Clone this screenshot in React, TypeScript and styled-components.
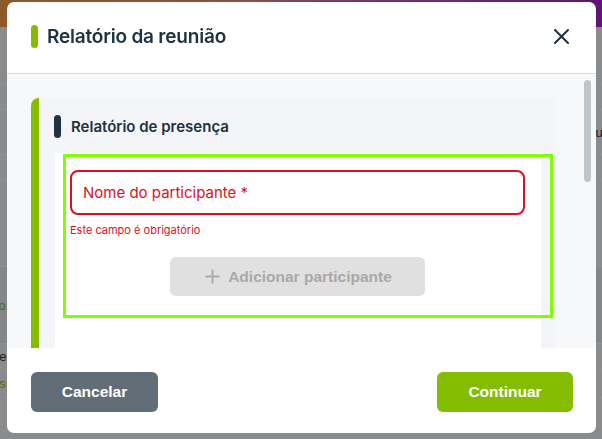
import styled, { createGlobalStyle } from "styled-components";

const GlobalStyle = createGlobalStyle`
  * { box-sizing: border-box; }
  html, body { margin: 0; padding: 0; height: 100%; }
  body {
    font-family: Inter, "Noto Sans", sans-serif;
    background: #eeeff1;
    overflow: hidden;
  }
`;

// page behind the dialog (only its edges show)
const Page = styled.div`
  width: 602px;
  height: 439px;
  display: flex;
  flex-direction: column;
`;

const TopBar = styled.div`
  height: 27px;
  background: linear-gradient(90deg, #f49a45 0%, #e2907a 40%, #c95fb8 60%, #a623c9 100%);
`;

const PageRow = styled.div<{ $h: number; $shade?: boolean }>`
  height: ${p => p.$h}px;
  border-bottom: 1px solid #fafafa;
  background: ${p => (p.$shade ? "#e6e7e9" : "transparent")};
  display: flex;
  align-items: center;
  justify-content: space-between;
  font-family: "Liberation Sans", Arial, sans-serif;
  font-size: 13px;
`;

const PageText = styled.span<{ $green?: boolean }>`
  color: ${p => (p.$green ? "#84bd00" : "#1e3241")};
  margin-left: -8px;
  margin-right: -8px;
`;

const Overlay = styled.div`
  position: fixed;
  inset: 0;
  background: rgba(0, 0, 0, 0.42);
  display: flex;
  padding: 2px 6px 6px 7px;
`;

const Modal = styled.div`
  flex: 1;
  background: #fff;
  border-radius: 7px;
  display: flex;
  flex-direction: column;
  overflow: hidden;
`;

const Header = styled.header`
  height: 72px;
  flex-shrink: 0;
  display: flex;
  align-items: center;
  padding: 0 27px 2px 24px;
  border-bottom: 1px solid #d6dee4;
`;

const Pill = styled.span<{ $color: string; $h: number; $w: number }>`
  width: ${p => p.$w}px;
  height: ${p => p.$h}px;
  border-radius: 4px;
  background: ${p => p.$color};
  flex-shrink: 0;
`;

const Title = styled.h1`
  margin: 0 0 0 9px;
  font-size: 19px;
  font-weight: 600;
  color: #1e3241;
  letter-spacing: -0.2px;
  flex: 1;
`;

const CloseButton = styled.button`
  border: none;
  background: none;
  padding: 0;
  width: 16px;
  height: 16px;
  display: flex;
  align-items: center;
  justify-content: center;
  cursor: pointer;
`;

const Body = styled.div`
  position: relative;
  flex: 1;
  background: #f7f8fa;
  padding: 24px 40px 0 24px;
  overflow: hidden;
`;

const ScrollThumb = styled.div`
  position: absolute;
  right: 5px;
  top: 6px;
  width: 7px;
  height: 102px;
  border-radius: 4px;
  background: #bfc4c9;
`;

const Card = styled.section`
  background: #f3f5f8;
  border-left: 8px solid #84bd00;
  border-top-left-radius: 8px;
  padding: 17px 15px 0 16px;
  height: 100%;
`;

const SectionHead = styled.div`
  display: flex;
  align-items: center;
  gap: 10px;
  margin-left: -1px;
`;

const SectionTitle = styled.h2`
  margin: 0;
  font-size: 15px;
  font-weight: 600;
  color: #1e3241;
`;

const WhiteBox = styled.div`
  background: #fff;
  margin-top: 15px;
  padding-top: 1px;
  height: 200px;
`;

const FocusBox = styled.div`
  margin-left: 8px;
  margin-right: -12px;
  border: 3px solid #80ff00;
  padding: 13px 25px 19px 4px;
  display: flex;
  flex-direction: column;
`;

const Field = styled.div`
  height: 45px;
  border: 2px solid #d8121f;
  border-radius: 8px;
  display: flex;
  align-items: center;
  padding-left: 11px;
  font-size: 15px;
  color: #d8121f;
`;

const ErrorText = styled.span`
  margin-top: 8px;
  font-size: 11px;
  color: #d8121f;
  line-height: 14px;
`;

const AddButton = styled.button`
  align-self: center;
  margin-top: 20px;
  width: 255px;
  height: 39px;
  border: none;
  border-radius: 6px;
  background: #e0e0e0;
  color: #a9a9a9;
  font-family: "Liberation Sans", Arial, sans-serif;
  font-weight: 700;
  font-size: 15.5px;
  display: flex;
  align-items: center;
  justify-content: center;
  gap: 8px;
  padding: 0 0 0 2px;
`;

const Footer = styled.footer`
  height: 85px;
  flex-shrink: 0;
  display: flex;
  align-items: flex-start;
  justify-content: space-between;
  padding: 24px 23px 0 24px;
`;

const FooterButton = styled.button<{ $primary?: boolean }>`
  height: 40px;
  width: ${p => (p.$primary ? 136 : 127)}px;
  border: none;
  border-radius: 6px;
  background: ${p => (p.$primary ? "#84bd00" : "#616e78")};
  color: #fff;
  font-family: "Liberation Sans", Arial, sans-serif;
  font-weight: 700;
  font-size: 15.5px;
  cursor: pointer;
`;

function App() {
  return (
    <>
      <GlobalStyle />
      <Page>
        <TopBar />
        <PageRow $h={58} />
        <PageRow $h={25} />
        <PageRow $h={45}>
          <span />
          <PageText>ub</PageText>
        </PageRow>
        <PageRow $h={25} />
        <PageRow $h={87} />
        <PageRow $h={77} $shade>
          <PageText $green>co</PageText>
        </PageRow>
        <PageRow $h={26}>
          <PageText>de</PageText>
        </PageRow>
        <PageRow $h={28}>
          <PageText $green>as</PageText>
        </PageRow>
      </Page>
      <Overlay>
        <Modal>
          <Header>
            <Pill $color="#84bd00" $h={23} $w={7} />
            <Title>Relatório da reunião</Title>
            <CloseButton aria-label="Fechar">
              <svg width="15" height="15" viewBox="0 0 15 15" fill="none" stroke="#1e3241" strokeWidth="2" strokeLinecap="round">
                <path d="M1 1 L14 14 M14 1 L1 14" />
              </svg>
            </CloseButton>
          </Header>
          <Body>
            <ScrollThumb />
            <Card>
              <SectionHead>
                <Pill $color="#1e3241" $h={23} $w={7} />
                <SectionTitle>Relatório de presença</SectionTitle>
              </SectionHead>
              <WhiteBox>
                <FocusBox>
                  <Field>Nome do participante *</Field>
                  <ErrorText>Este campo é obrigatório</ErrorText>
                  <AddButton disabled>
                    <svg width="15" height="15" viewBox="0 0 15 15" stroke="#a9a9a9" strokeWidth="1.8">
                      <path d="M7.5 0.5 V14.5 M0.5 7.5 H14.5" />
                    </svg>
                    Adicionar participante
                  </AddButton>
                </FocusBox>
              </WhiteBox>
            </Card>
          </Body>
          <Footer>
            <FooterButton>Cancelar</FooterButton>
            <FooterButton $primary>Continuar</FooterButton>
          </Footer>
        </Modal>
      </Overlay>
    </>
  );
}

export default App;
